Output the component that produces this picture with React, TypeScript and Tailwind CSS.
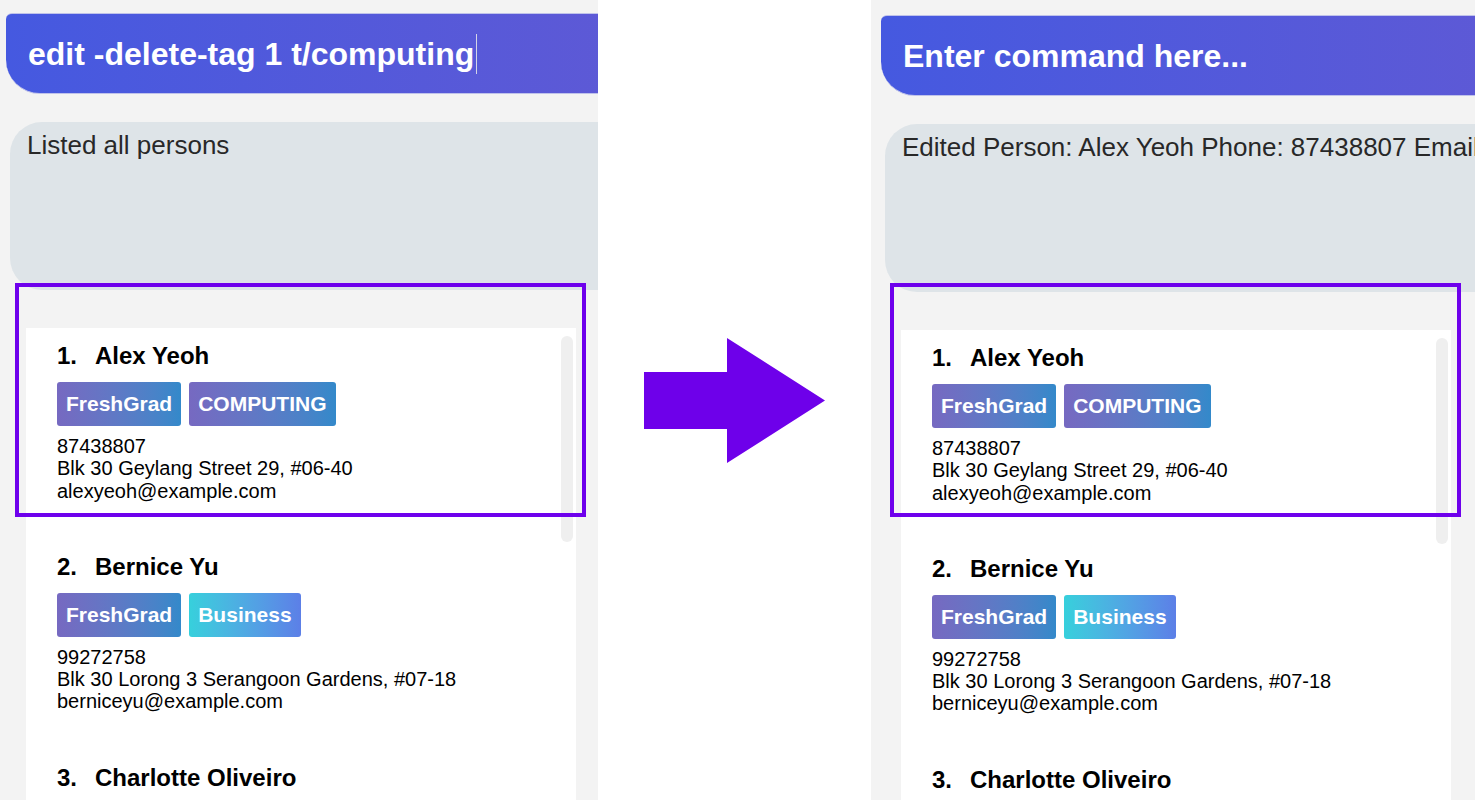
import React from "react";

interface IPerson {
  name: string;
  tags: { label: string; kind: "grad" | "biz" }[];
  phone?: string;
  address?: string;
  email?: string;
}

const persons: IPerson[] = [
  {
    name: "Alex Yeoh",
    tags: [
      { label: "FreshGrad", kind: "grad" },
      { label: "COMPUTING", kind: "grad" },
    ],
    phone: "87438807",
    address: "Blk 30 Geylang Street 29, #06-40",
    email: "alexyeoh@example.com",
  },
  {
    name: "Bernice Yu",
    tags: [
      { label: "FreshGrad", kind: "grad" },
      { label: "Business", kind: "biz" },
    ],
    phone: "99272758",
    address: "Blk 30 Lorong 3 Serangoon Gardens, #07-18",
    email: "berniceyu@example.com",
  },
  // only the name of the third card is on screen
  { name: "Charlotte Oliveiro", tags: [] },
];

const Tag = ({ label, kind }: { label: string; kind: "grad" | "biz" }) => (
  <div
    className={
      kind === "grad"
        ? "h-[44px] px-[9px] flex items-center rounded-[3px] text-white font-bold text-[21px] bg-gradient-to-r from-[#7669c1] to-[#3389ca]"
        : "h-[44px] px-[9px] flex items-center rounded-[3px] text-white font-bold text-[21px] bg-gradient-to-r from-[#36d0dc] to-[#5c7fe7]"
    }
  >
    {label}
  </div>
);

const PersonCard = ({ person, index }: { person: IPerson; index: number }) => (
  <div className="pt-[14px] pb-[37px] pl-[31px] text-black">
    <div className="flex text-[24px] leading-[28px] font-bold">
      <span className="w-[38px]">{index}.</span>
      <span>{person.name}</span>
    </div>
    {person.tags.length > 0 && (
      <div className="flex gap-[8px] mt-[12px]">
        {person.tags.map((t) => (
          <Tag key={t.label} label={t.label} kind={t.kind} />
        ))}
      </div>
    )}
    {person.phone && (
      <div className="mt-[9px] text-[20px] leading-[22.3px]">
        <p>{person.phone}</p>
        <p>{person.address}</p>
        <p>{person.email}</p>
      </div>
    )}
  </div>
);

const Panel = ({
  command,
  placeholder,
  result,
  right,
}: {
  command: string;
  placeholder: boolean;
  result: string;
  right?: boolean;
}) => (
  <div
    className={
      right
        ? "relative h-full flex-1 bg-[#f3f3f3] overflow-hidden flex flex-col pl-[4px] pt-[2px]"
        : "relative h-full w-[598px] shrink-0 bg-[#f3f3f3] overflow-hidden flex flex-col"
    }
  >
    <div className="ml-[6px] mt-[13px] h-[81px] w-[720px] shrink-0 rounded-tl-[6px] rounded-bl-[34px] border-y border-[#bfc2ea] bg-gradient-to-r from-[#4559e0] to-[#6159d4] pl-[22px] flex items-center text-white font-bold text-[32px] whitespace-nowrap">
      <span>{command}</span>
      {!placeholder && (
        <span className="ml-[2px] w-px h-[40px] bg-[#d4d4e6]" />
      )}
    </div>
    <div className="ml-[10px] mt-[28px] h-[168px] w-[720px] shrink-0 rounded-l-[32px] bg-[#dee4e8] pl-[17px] pt-[8px] text-[26px] leading-[30px] text-[#282828] whitespace-nowrap">
      {result}
    </div>
    <div className="ml-[26px] mt-[38px] w-[550px] flex-1 bg-white flex overflow-hidden">
      <div className="flex-1">
        {persons.map((p, i) => (
          <PersonCard key={p.name} person={p} index={i + 1} />
        ))}
      </div>
      <div className="w-[12px] h-[206px] mt-[8px] mr-[3px] rounded-full bg-[#efefef]" />
    </div>
    <div
      className={
        right
          ? "absolute left-[19px] top-[283px] w-[571px] h-[234px] border-4 border-[#6e00ec]"
          : "absolute left-[15px] top-[283px] w-[571px] h-[234px] border-4 border-[#6e00ec]"
      }
    />
  </div>
);

export default function App() {
  return (
    <div className="w-[1475px] h-[800px] overflow-hidden bg-white flex font-['Liberation_Sans',Arial,sans-serif]">
      <Panel
        command="edit -delete-tag 1 t/computing"
        placeholder={false}
        result="Listed all persons"
      />
      <div className="w-[273px] shrink-0 h-full flex items-center justify-center">
        <svg width="181" height="125" viewBox="0 0 181 125">
          <polygon
            points="0,34 83,34 83,0 181,62.5 83,125 83,91 0,91"
            fill="#6e00ea"
          />
        </svg>
      </div>
      <Panel
        right
        command="Enter command here..."
        placeholder={true}
        result="Edited Person: Alex Yeoh Phone: 87438807 Email: alexyeoh@example.com"
      />
    </div>
  );
}
